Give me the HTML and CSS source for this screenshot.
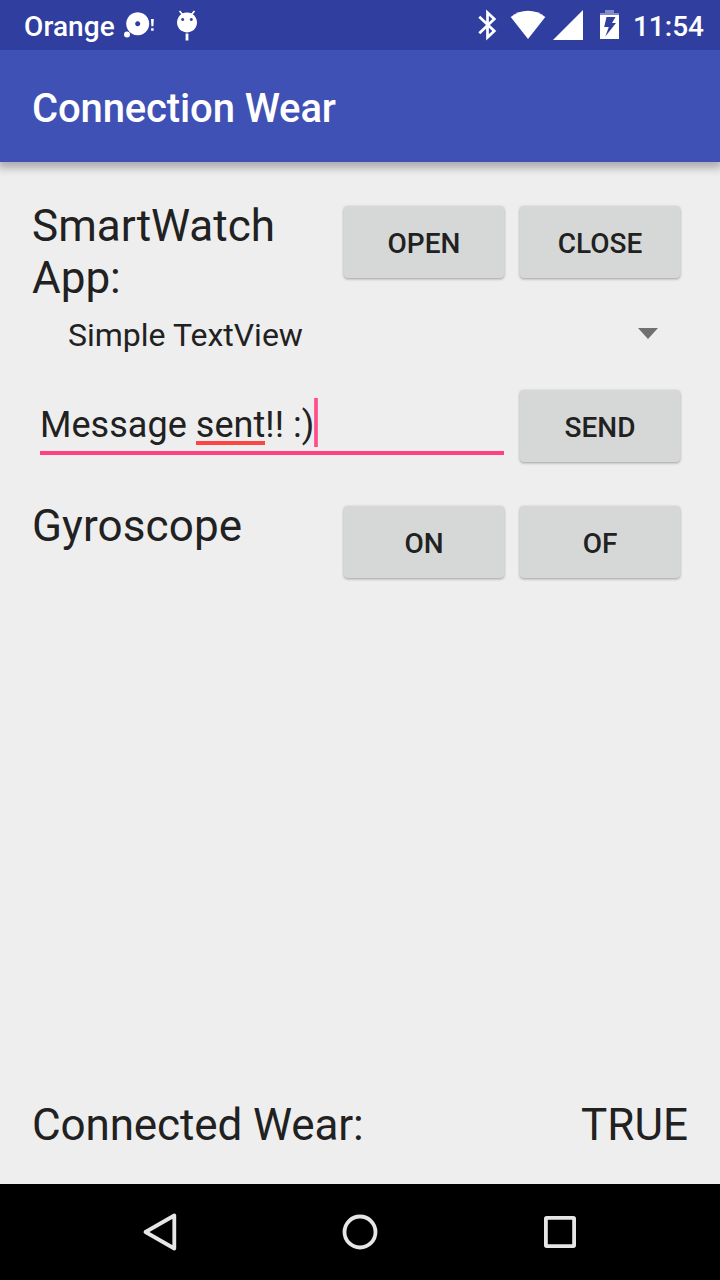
FILE: index.html
```html
<!DOCTYPE html>
<html lang="en">
<head>
<meta charset="utf-8">
<title>Connection Wear</title>
<link rel="stylesheet" href="styles.css">
</head>
<body>
<div class="screen">
  <div class="status-bar">
    <span class="carrier">Orange</span>
    <svg class="status-icons-left" width="80" height="50" viewBox="120 0 80 50" fill="#fff">
      <path fill-rule="evenodd" d="M137.700 12.300a11.500 11.500 0 1 0 .01 0zM137.700 21.300a2.500 2.500 0 1 1-.01 0z"/>
      <circle cx="127" cy="34.500" r="3"/>
      <path d="M151 19h2.800l-.4 7.300h-2zM151.100 28.200h2.500v2.600h-2.500z"/>
      <path fill-rule="evenodd" d="M187 12.400a10 10 0 1 0 .01 0zM182.700 18a1.500 1.500 0 1 1-.01 0zM191.300 18a1.500 1.500 0 1 1-.01 0z"/>
      <path d="M179.500 11l3.500 4M194.500 11l-3.500 4" stroke="#fff" stroke-width="1.800"/>
      <path d="M185.600 33.500h2.800v7h-2.800z"/>
    </svg>
    <svg class="status-icons-right" width="150" height="50" viewBox="475 0 150 50" fill="#fff">
      <path d="M479.300 16.800l15 14.200-6.800 6.300V12.700l6.800 6.300-15 14.200" fill="none" stroke="#fff" stroke-width="2.700"/>
      <path d="M510.700 17C520.500 8.500 535.500 8.500 545.300 17L528 39z"/>
      <path d="M583 10v30h-30z"/>
      <path d="M605 10h9v3h5v2h-19v-2h5z" opacity=".4"/>
      <path fill-rule="evenodd" d="M600 15h19v24h-19zM606.500 17l-2.300 10h4.600l-3.500 9.500 10.700-13.500h-4l3.500-6z"/>
    </svg>
    <span class="clock">11:54</span>
  </div>
  <header class="app-bar"><h1 class="app-title">Connection Wear</h1></header>
  <main class="content">
    <section class="row row-app">
      <span class="label label-app">SmartWatch App:</span>
      <div class="actions"><button class="btn">OPEN</button><button class="btn">CLOSE</button></div>
    </section>
    <section class="spinner">
      <span>Simple TextView</span>
      <svg class="caret" width="20" height="11" viewBox="0 0 20 11"><path d="M0 0h20L10 11z" fill="#707070"/></svg>
    </section>
    <section class="row row-message">
      <div class="field"><span class="field-text">Message <span class="misspelled">sent</span>!! :)</span><span class="cursor"></span></div>
      <button class="btn">SEND</button>
    </section>
    <section class="row row-gyro">
      <span class="label label-gyro">Gyroscope</span>
      <div class="actions"><button class="btn">ON</button><button class="btn">OF</button></div>
    </section>
    <footer class="connection">
      <span class="label label-connected">Connected Wear:</span><span class="label label-state">TRUE</span>
    </footer>
  </main>
  <nav class="nav-bar">
    <svg width="200" height="96" viewBox="60 1184 200 96"><path d="M174.300 1215.500v33L145.500 1232z"/></svg>
    <svg width="200" height="96" viewBox="260 1184 200 96"><circle cx="360" cy="1232" r="15.500"/></svg>
    <svg width="200" height="96" viewBox="460 1184 200 96"><rect x="545.900" y="1217.900" width="28.200" height="28.200" rx=".8"/></svg>
  </nav>
</div>
</body>
</html>
```

FILE: styles.css
```css
* { box-sizing: border-box; }
body { margin: 0; font-family: Roboto, sans-serif; color: #212121; }
.screen { display: flex; flex-direction: column; width: 720px; height: 1280px; background: #eee; overflow: hidden; }
.status-bar { position: relative; z-index: 1; display: flex; height: 50px; padding: 0 16px 0 24px; background: #303f9f; color: #fff; font-size: 28px; font-weight: 500; line-height: 54px; white-space: nowrap; }
.carrier { width: 96px; letter-spacing: .1px; }
.status-icons-right { margin-left: auto; margin-right: 8px; }
.app-bar { display: flex; flex: none; align-items: center; height: 112px; padding: 5px 32px 0; background: #3f51b5; box-shadow: 0 4px 8px 2px rgba(0,0,0,.28); }
.app-title { margin: 0; color: #fff; font-size: 40px; font-weight: 500; line-height: 48px; letter-spacing: -.13px; }
.content { display: flex; flex-direction: column; flex: 1; padding: 38px 32px 33px; }
.row { display: flex; justify-content: space-between; padding-right: 8px; }
.row-app { height: 104px; }
.label { font-size: 44px; line-height: 52px; white-space: nowrap; }
.label-app { width: 280px; white-space: normal; }
.label-gyro { letter-spacing: .1px; }
.label-connected { letter-spacing: -.12px; }
.actions { display: flex; gap: 16px; padding-top: 6px; }
.btn { width: 160px; height: 72px; padding: 3px 0 0; border: 0; border-radius: 4px; background: #d6d8d7; box-shadow: 0 1px 3px rgba(0,0,0,.35); color: #212121; font: 500 28px/33px Roboto, sans-serif; }
.spinner { display: flex; align-items: center; justify-content: space-between; height: 60px; padding: 2px 30px 0 36px; font-size: 32px; line-height: 38px; }
.caret { margin-bottom: 3px; }
.row-message { height: 136px; padding-top: 26px; align-items: flex-start; }
.field { display: flex; width: 464px; height: 65px; margin-left: 8px; padding-top: 8px; border-bottom: 4px solid #ff4081; font-size: 36px; line-height: 55px; letter-spacing: .04px; white-space: pre; }
.misspelled { display: inline-block; height: 47px; border-bottom: 4px solid #ff4444; vertical-align: top; }
.cursor { width: 4px; height: 49px; background: linear-gradient(90deg, #ff73a3, #ff4081 50%, #ff73a3); }
.connection { display: flex; justify-content: space-between; margin-top: auto; }
.nav-bar { display: flex; justify-content: center; height: 96px; background: #000; fill: none; stroke: #e6e6e6; stroke-width: 3.8; stroke-linejoin: round; }
```
